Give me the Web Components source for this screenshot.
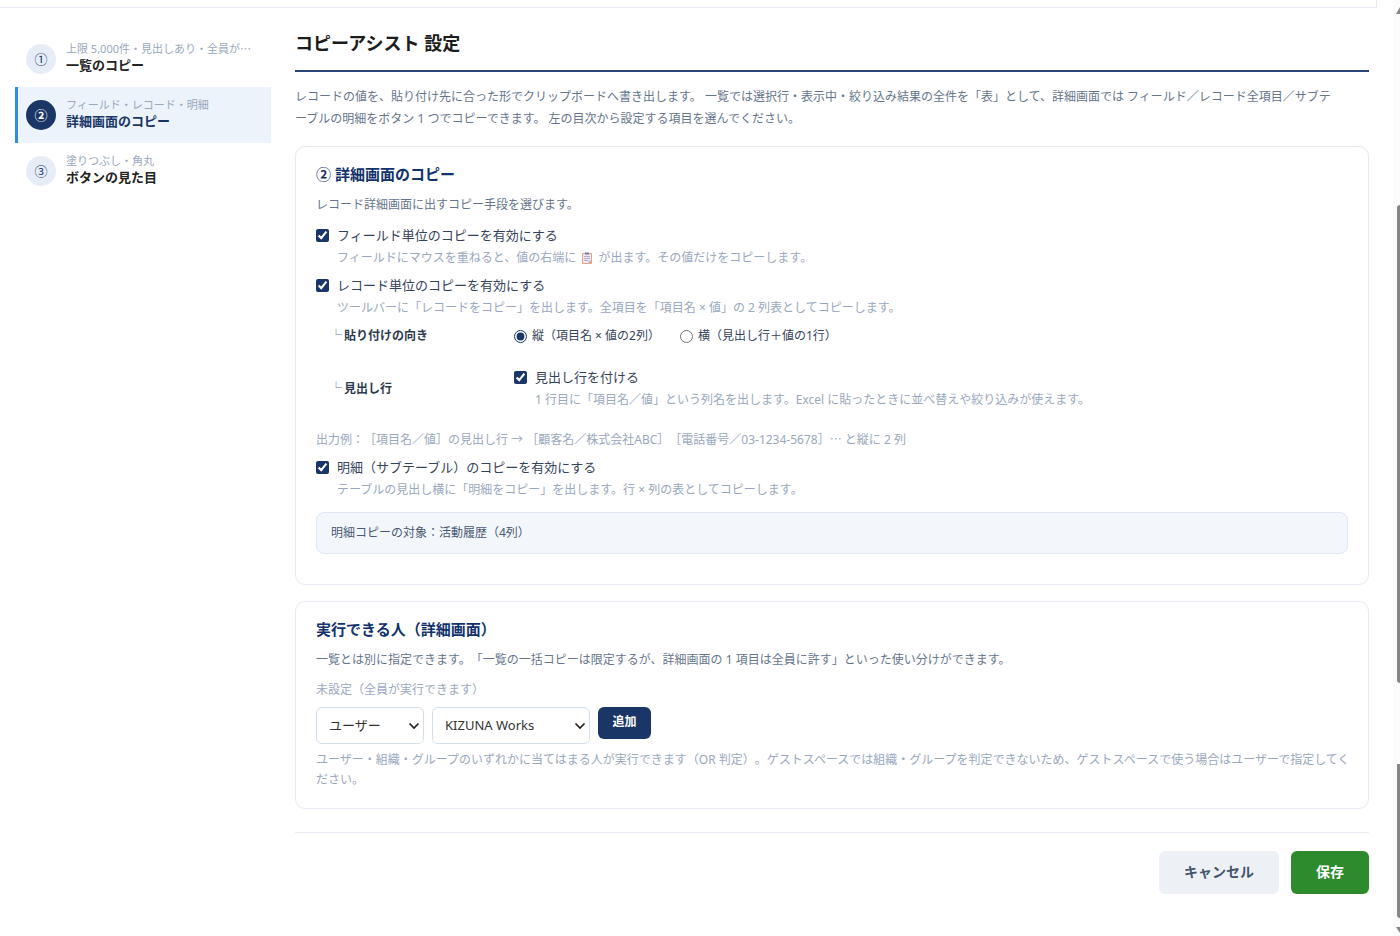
<!DOCTYPE html>
<html lang="ja">
<head>
<meta charset="utf-8">
<meta name="viewport" content="width=device-width, initial-scale=1">
<title>コピーアシスト 設定</title>
<style>
  html { height: 100%; }
  body {
    margin: 0; min-height: 100%; background: #fff; color: #222;
    font-family: "Noto Sans", "Noto Sans CJK JP", sans-serif;
    font-size: 12px; line-height: 20px;
    text-spacing-trim: space-all;
    --navy: #1a3666; --line: #e5eaf3; --muted: #9aa8be; --text: #66758c;
  }
  .dots { font-family: "Noto Sans CJK JP", sans-serif; line-height: 1; }
</style>
</head>
<body>
<settings-page>
  <step-nav slot="nav">
    <step-item mark="①"><span slot="sub">上限 5,000件・見出しあり・全員が<span class="dots">…</span></span>一覧のコピー</step-item>
    <step-item mark="②" active><span slot="sub">フィールド・レコード・明細</span>詳細画面のコピー</step-item>
    <step-item mark="③"><span slot="sub">塗りつぶし・角丸</span>ボタンの見た目</step-item>
  </step-nav>

  <page-intro heading="コピーアシスト 設定">レコードの値を、貼り付け先に合った形でクリップボードへ書き出します。 一覧では選択行・表示中・絞り込み結果の全件を「表」として、詳細画面では フィールド／レコード全項目／サブテ<br>ーブルの明細をボタン 1 つでコピーできます。 左の目次から設定する項目を選んでください。</page-intro>

  <settings-card heading="② 詳細画面のコピー">
    <span slot="lead">レコード詳細画面に出すコピー手段を選びます。</span>
    <check-field label="フィールド単位のコピーを有効にする">フィールドにマウスを重ねると、値の右端に <clipboard-icon></clipboard-icon> が出ます。その値だけをコピーします。</check-field>
    <check-field label="レコード単位のコピーを有効にする">ツールバーに「レコードをコピー」を出します。全項目を「項目名 × 値」の 2 列表としてコピーします。</check-field>
    <sub-row heading="貼り付けの向き"><direction-choice></direction-choice></sub-row>
    <sub-row heading="見出し行"><check-field label="見出し行を付ける">1 行目に「項目名／値」という列名を出します。Excel に貼ったときに並べ替えや絞り込みが使えます。</check-field></sub-row>
    <help-text>出力例：［項目名／値］の見出し行 → ［顧客名／株式会社ABC］［電話番号／03-1234-5678］<span class="dots">…</span> と縦に 2 列</help-text>
    <check-field label="明細（サブテーブル）のコピーを有効にする">テーブルの見出し横に「明細をコピー」を出します。行 × 列の表としてコピーします。</check-field>
    <info-box>明細コピーの対象：活動履歴（4列）</info-box>
  </settings-card>

  <settings-card heading="実行できる人（詳細画面）" compact>
    <span slot="lead">一覧とは別に指定できます。「一覧の一括コピーは限定するが、詳細画面の 1 項目は全員に許す」といった使い分けができます。</span>
    <member-picker></member-picker>
  </settings-card>

  <form-actions></form-actions>
</settings-page>
<page-scrollbar></page-scrollbar>

<script>
const define = (name, html, setup) => {
  const template = document.createElement('template');
  template.innerHTML = html;
  customElements.define(name, class extends HTMLElement {
    connectedCallback() {
      if (this.shadowRoot) return;
      const root = this.attachShadow({ mode: 'open' });
      root.append(template.content.cloneNode(true));
      if (setup) setup(this, root);
    }
  });
};
const fillHeading = (host, root) => {
  root.querySelector('.heading').textContent = host.getAttribute('heading');
};

define('settings-page', `
<style>
  :host { display: block; }
  .edge { height: 7px; margin-right: 23px; border: solid var(--line); border-width: 0 1px 1px 0; }
  .columns { display: grid; grid-template-columns: 256px minmax(0, 1fr); gap: 24px; padding: 23px 31px 32px 15px; }
</style>
<div class="edge"></div>
<div class="columns">
  <slot name="nav"></slot>
  <main><slot></slot></main>
</div>`);

define('step-nav', `
<style>:host { display: block; } nav { display: flex; flex-direction: column; }</style>
<nav aria-label="目次"><slot></slot></nav>`);

define('step-item', `
<style>
  :host { display: block; }
  a { display: flex; align-items: center; gap: 10px; height: 56px; box-sizing: border-box; padding: 0 16px 0 8px;
      border-left: 3px solid transparent; color: #222; text-decoration: none; }
  .mark { flex: none; width: 30px; height: 30px; border-radius: 50%; background: #e6edf7; color: var(--navy);
      font-size: 13px; line-height: 30px; text-align: center; }
  .text { min-width: 0; padding-bottom: 4px; }
  .sub { display: block; font-size: 11px; line-height: 16px; color: var(--muted);
      white-space: nowrap; overflow: hidden; text-overflow: ellipsis; }
  .name { display: block; font-size: 13px; line-height: 17px; font-weight: 700; }
  :host([active]) a { background: #ecf3fb; border-left-color: #2d8fd8; color: var(--navy); }
  :host([active]) .mark { background: var(--navy); color: #fff; font-weight: 700; }
</style>
<a href="#"><span class="mark"></span><span class="text"><span class="sub"><slot name="sub"></slot></span><span class="name"><slot></slot></span></span></a>`,
(host, root) => {
  root.querySelector('.mark').textContent = host.getAttribute('mark');
  if (host.hasAttribute('active')) root.querySelector('a').setAttribute('aria-current', 'page');
});

define('page-intro', `
<style>
  :host { display: block; margin-bottom: 16px; }
  h1 { margin: 0; padding-bottom: 15px; border-bottom: 2px solid #2a4679; font-size: 18px; line-height: 24px; color: #1c1c1c; }
  p { margin: 14px 0 0; line-height: 22px; color: var(--text); }
</style>
<h1 class="heading"></h1>
<p><slot></slot></p>`, fillHeading);

define('settings-card', `
<style>
  :host { display: block; margin-bottom: 16px; padding: 15px 20px 30px; border: 1px solid var(--line); border-radius: 10px; }
  :host([compact]) { padding-bottom: 18px; margin-bottom: 23px; }
  h2 { margin: 0; font-size: 15px; line-height: 24px; color: #12326b; }
  p { margin: 9px 0 10px; color: var(--text); }
</style>
<section><h2 class="heading"></h2><p><slot name="lead"></slot></p><slot></slot></section>`, fillHeading);

define('check-field', `
<style>
  :host { display: block; margin-bottom: 7px; }
  label { display: flex; align-items: center; gap: 8px; font-size: 13px; line-height: 20px; color: #35435a; }
  input { flex: none; width: 13px; height: 13px; margin: 0; accent-color: var(--navy); }
  .hint { margin: 3px 0 0 21px; color: var(--muted); }
</style>
<label for="box"><input id="box" type="checkbox" checked aria-describedby="hint"><span class="label"></span></label>
<div class="hint" id="hint"><slot></slot></div>`,
(host, root) => { root.querySelector('.label').textContent = host.getAttribute('label'); });

define('clipboard-icon', `
<style>:host { display: inline-block; width: 16px; height: 12px; vertical-align: -2px; text-align: center; } svg { display: block; margin: auto; }</style>
<svg width="12" height="12" viewBox="0 0 12 12" aria-hidden="true">
  <rect x="1" y="1" width="10" height="11" rx="1" fill="#e0a184"/>
  <path d="M2 2h8v6.500L7.500 11H2z" fill="#eee9f5"/>
  <path d="M10 8.500H7.500V11z" fill="#c8b7ce"/>
  <path d="M4 .5h4v2H4z" fill="#7c7795"/>
  <path d="M3 4.500h6M3 6.500h6M3 8.500h4" stroke="#a19ac0" stroke-width=".8"/>
</svg>`);

define('sub-row', `
<style>
  :host { display: grid; grid-template-columns: 184px minmax(0, 1fr); align-items: center; margin: 0 0 20px 14px; padding-top: 1px; }
  .name { color: #2d3b50; font-weight: 700; }
  .branch { margin-right: 2px; color: #66758c; font-weight: 400; }
  ::slotted(check-field) { margin-bottom: 0; }
</style>
<div class="name"><span class="branch">└</span><span class="heading"></span></div>
<div><slot></slot></div>`, fillHeading);

define('direction-choice', `
<style>
  :host { display: block; }
  fieldset { display: flex; gap: 20px; margin: 0; padding: 0; border: 0; }
  label { display: flex; align-items: center; gap: 5px; color: #35435a; }
  input { width: 13px; height: 13px; margin: 0; accent-color: var(--navy); }
</style>
<fieldset aria-label="貼り付けの向き">
  <label><input type="radio" name="direction" checked>縦（項目名 × 値の2列）</label>
  <label><input type="radio" name="direction">横（見出し行＋値の1行）</label>
</fieldset>`);

define('help-text', `
<style>:host { display: block; margin-bottom: 7px; color: var(--muted); }</style><slot></slot>`);

define('info-box', `
<style>:host { display: block; margin-top: 12px; padding: 10px 14px; border: 1px solid #dfe7f2; border-radius: 8px; background: #f3f7fc; color: #4a5870; }</style><slot></slot>`);

define('member-picker', `
<style>
  :host { display: block; color: var(--muted); }
  .row { display: flex; align-items: flex-start; gap: 8px; margin: 7px 0 6px; }
  .field { position: relative; }
  select { appearance: none; display: block; height: 37px; padding: 0 12px 2px; border: 1px solid #d3deec; border-radius: 6px;
      background: #fff; color: #333; font: 13px/20px "Noto Sans", "Noto Sans CJK JP", sans-serif; }
  #kind { width: 108px; }
  #who { width: 158px; }
  svg { position: absolute; right: 4px; top: 13px; pointer-events: none; }
  button { height: 32px; width: 53px; padding: 0 0 2px; border: 0; border-radius: 6px; background: var(--navy); color: #fff;
      font: 700 12px/20px "Noto Sans", "Noto Sans CJK JP", sans-serif; }
  p { margin: 0 -8px 0 0; }
</style>
<div>未設定（全員が実行できます）</div>
<div class="row">
  <div class="field"><select id="kind" aria-label="種別"><option>ユーザー</option><option>組織</option><option>グループ</option></select>
    <svg width="12" height="12" viewBox="0 0 12 12"><path d="M1.500 3.500L6 8l4.500-4.500" fill="none" stroke="#222" stroke-width="1.700"/></svg></div>
  <div class="field"><select id="who" aria-label="対象"><option>KIZUNA Works</option></select>
    <svg width="12" height="12" viewBox="0 0 12 12"><path d="M1.500 3.500L6 8l4.500-4.500" fill="none" stroke="#222" stroke-width="1.700"/></svg></div>
  <button type="button">追加</button>
</div>
<p>ユーザー・組織・グループのいずれかに当てはまる人が実行できます（OR 判定）。ゲストスペースでは組織・グループを判定できないため、ゲストスペースで使う場合はユーザーで指定してく<br>ださい。</p>`);

define('form-actions', `
<style>
  :host { display: flex; justify-content: flex-end; gap: 12px; padding-top: 18px; border-top: 1px solid var(--line); }
  button { height: 43px; padding: 0 25px 2px; border: 0; border-radius: 6px; font: 700 14px/20px "Noto Sans", "Noto Sans CJK JP", sans-serif; }
  .cancel { background: #edf1f6; color: #44546b; }
  .save { background: #2d8a2d; color: #fff; }
</style>
<button type="button" class="cancel">キャンセル</button>
<button type="submit" class="save">保存</button>`);

/* Custom scroll rail that lies over the right edge of the window. */
define('page-scrollbar', `
<style>
  :host { position: fixed; top: 0; right: 0; bottom: 0; width: 7px; display: flex; flex-direction: column; background: #fbfbfb; overflow: hidden; }
  svg { display: block; flex: none; margin-left: 3px; }
  .thumb { margin-left: 4px; background: #878787; }
  .outer { flex: 478; margin-top: 190px; border-radius: 4px 0 0 4px; }
  .inner { flex: 154; margin-top: 81px; border-radius: 0 0 0 4px; }
  .down { margin-top: 8px; }
</style>
<svg width="4" height="15" viewBox="0 0 4 15"><path d="M0 14L4 7v7z" fill="#878787"/></svg>
<div class="thumb outer"></div>
<div class="thumb inner"></div>
<svg class="down" width="4" height="10" viewBox="0 0 4 10"><path d="M0 1h4v6z" fill="#878787"/></svg>`);
</script>
</body>
</html>
